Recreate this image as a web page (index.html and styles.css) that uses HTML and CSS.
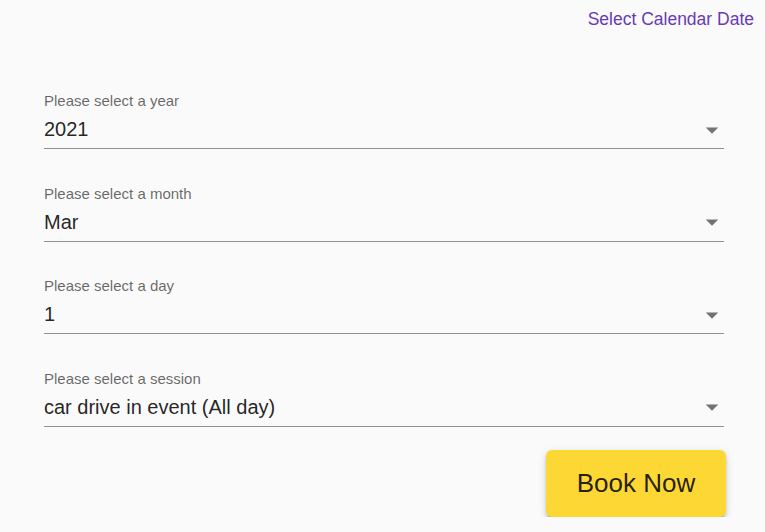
FILE: index.html
```html
<!DOCTYPE html>
<html>
<head>
<meta charset="utf-8">
<link rel="stylesheet" href="styles.css">
</head>
<body>
<div class="page">
  <header class="topbar">
    <a class="cal-link" href="#">Select Calendar Date</a>
  </header>
  <form class="form">
    <div class="field">
      <label class="field-label">Please select a year</label>
      <div class="select">
        <span class="select-value">2021</span>
        <svg class="select-icon" viewBox="0 0 24 24"><path d="M7 10l5 5 5-5z"/></svg>
      </div>
    </div>
    <div class="field">
      <label class="field-label">Please select a month</label>
      <div class="select">
        <span class="select-value">Mar</span>
        <svg class="select-icon" viewBox="0 0 24 24"><path d="M7 10l5 5 5-5z"/></svg>
      </div>
    </div>
    <div class="field">
      <label class="field-label">Please select a day</label>
      <div class="select">
        <span class="select-value">1</span>
        <svg class="select-icon" viewBox="0 0 24 24"><path d="M7 10l5 5 5-5z"/></svg>
      </div>
    </div>
    <div class="field">
      <label class="field-label">Please select a session</label>
      <div class="select">
        <span class="select-value">car drive in event (All day)</span>
        <svg class="select-icon" viewBox="0 0 24 24"><path d="M7 10l5 5 5-5z"/></svg>
      </div>
    </div>
    <div class="actions">
      <button type="button" class="book-btn">Book Now</button>
    </div>
  </form>
</div>
</body>
</html>
```

FILE: styles.css
```css
html, body {
  margin: 0;
  padding: 0;
  background: #fafafa;
}
body {
  font-family: "Liberation Sans", Arial, sans-serif;
  color: rgba(0, 0, 0, 0.87);
}
.page {
  width: 765px;
}
.topbar {
  display: flex;
  justify-content: flex-end;
  padding: 4px 11px 0 0;
  height: 93px;
  box-sizing: border-box;
}
.cal-link {
  font-size: 17.5px;
  line-height: 30.6px;
  color: #673ab7;
  text-decoration: none;
}
.form {
  margin: 0 41px 0 44px;
  display: flex;
  flex-direction: column;
}
.field {
  display: flex;
  flex-direction: column;
  margin-bottom: 36.67px;
}
.field-label {
  font-size: 15px;
  line-height: 15px;
  color: rgba(0, 0, 0, 0.6);
  margin-bottom: 3px;
}
.select {
  position: relative;
  padding: 6px 0 7px;
  border-bottom: 1px solid rgba(0, 0, 0, 0.42);
}
.select-value {
  display: block;
  font-size: 20px;
  line-height: 24px;
  color: rgba(0, 0, 0, 0.87);
}
.select-icon {
  position: absolute;
  right: -3px;
  top: 3.5px;
  width: 30px;
  height: 30px;
  fill: rgba(0, 0, 0, 0.54);
}
.actions {
  display: flex;
  justify-content: flex-end;
  margin-top: -13.67px;
  margin-right: -2px;
}
.book-btn {
  width: 180px;
  height: 67px;
  border: none;
  border-radius: 6px;
  background: #fdd835;
  color: rgba(0, 0, 0, 0.87);
  font-family: "Liberation Sans", Arial, sans-serif;
  font-size: 26px;
  cursor: pointer;
  box-shadow: 0 4px 2px -2px rgba(0,0,0,0.2), 0 3px 4px 0 rgba(0,0,0,0.14), 0 2px 8px 0 rgba(0,0,0,0.12);
}
```
